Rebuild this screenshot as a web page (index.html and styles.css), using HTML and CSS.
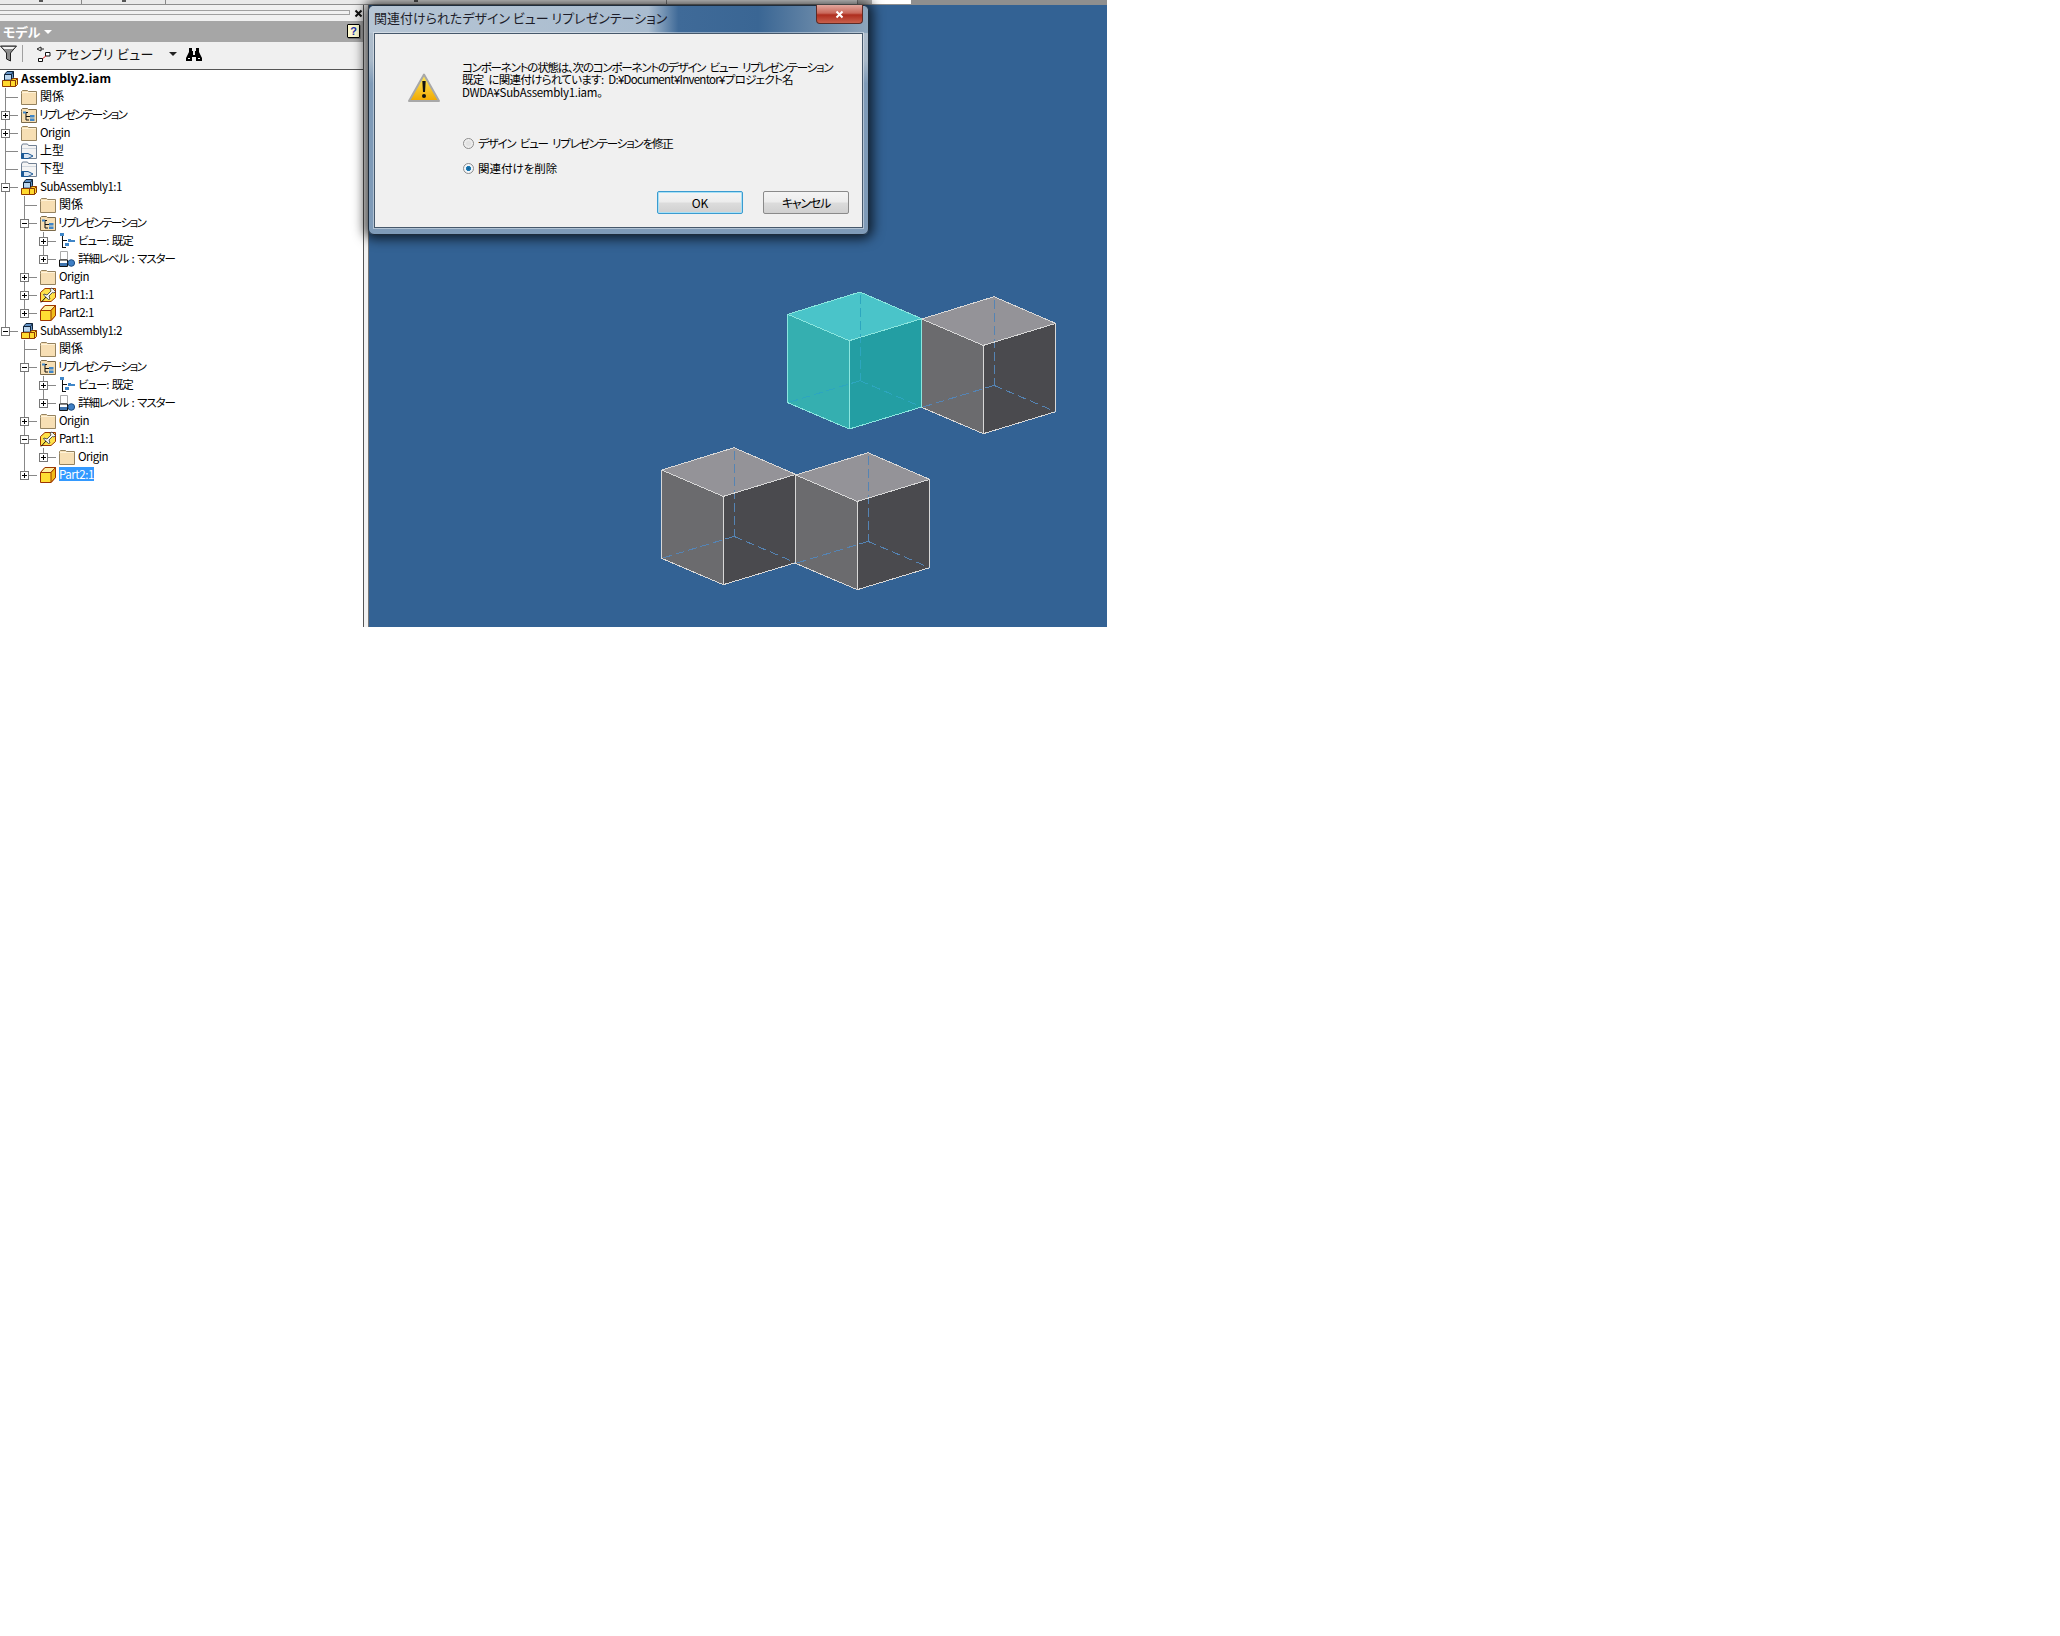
FILE: index.html
```html
<html>
  <head>
    <meta charset="utf-8">
    <title>関連付けられたデザイン ビュー リプレゼンテーション</title>
    <link rel="stylesheet" href="styles.css">
  </head>
  <body>
    <!-- shared icons -->
    <svg class="defs" width="0" height="0">
      <symbol id="i-folder" viewBox="0 0 16 16">
        <path d="M.5 4.5V15.5H15.5V2.5H7.5L6.5 1.5H1.5L.5 2.5Z" fill="#f7dfb4" stroke="#94825f"/>
        <path d="M1 3.5H15" stroke="#fff3d8"/>
      </symbol>
      <symbol id="i-rep" viewBox="0 0 16 16">
        <path d="M.5 4.5V15.5H15.5V2.5H7.5L6.5 1.5H1.5L.5 2.5Z" fill="#f7dfb4" stroke="#7c6a4a"/>
        <path d="M2.5 5.5H7M5 5.5V13H8M5 9.5H9" fill="none" stroke="#111"/>
        <path d="M9 8H13.5V10.5H9ZM9 11.5H13.5V14H9Z" fill="#3f86c8"/>
        <path d="M2 4.5H5V6.5H2Z" fill="#3f86c8"/>
      </symbol>
      <symbol id="i-seg" viewBox="0 0 16 16">
        <path d="M.5 3V15.5H15.5V2.5H7.5L6.5 1H1.5Z" fill="#f4f4f4" stroke="#6f7f92"/>
        <path d="M1 5.5H15" stroke="#cfd6de"/>
        <path d="M.5 10.5H7L12 13L7 15.5H.5Z" fill="#d9e5f2" stroke="#1d5a96"/>
        <path d="M.5 10.5H3V15.5H.5Z" fill="#1d5a96"/>
      </symbol>
      <symbol id="i-asm" viewBox="0 0 16 16">
        <path d="M2.5 3.5L5 .5H11.5V6.5L9.5 9H2.5Z" fill="#5f8fc4" stroke="#10243a"/>
        <path d="M3 4H9V8.5H3Z" fill="#bcd6ee"/>
        <path d="M2.5 3.5H9.5V9M9.5 3.5L11.5 .5" fill="none" stroke="#10243a"/>
        <path d="M.5 9.5H8.5V15.5H.5ZM8.5 9.5L11 7.5H15.5V13.5L13.5 15.5H8.5Z" fill="#ffd92e" stroke="#8d3a00"/>
        <path d="M8.5 9.5H13.5V15.5M13.5 9.5L15.5 7.5" fill="none" stroke="#8d3a00"/>
      </symbol>
      <symbol id="i-part" viewBox="0 0 16 16">
        <path d="M.5 5.5L5 .5H15.5V10.5L11 15.5H.5Z" fill="#ffdf33" stroke="#9c3500"/>
        <path d="M.5 5.5L5 .5H15.5L11 5.5Z" fill="#fff1a0" stroke="#9c3500"/>
        <path d="M11 5.5V15.5L15.5 10.5V.5Z" fill="#f0bc18" stroke="#9c3500"/>
      </symbol>
      <symbol id="i-pin" viewBox="0 0 16 16">
        <path d="M.5 5.5L5 1.5H15.5V10.5L11 14.5H.5Z" fill="#ffe24a" stroke="#9c3500"/>
        <path d="M1 15.5L6 10" stroke="#111"/>
        <path d="M4 7L7 8L11 4L10 2L12 1L15.5 4.5L14 6L12.5 5.5L9 9L10 12L8.5 12.5L3.5 8Z" fill="#f4f4f4" stroke="#333" stroke-width=".8"/>
      </symbol>
      <symbol id="i-view" viewBox="0 0 16 16">
        <path d="M1 0H5V3H1ZM9 6H12V9H9ZM12 7H16V9H12ZM6 10H10V13H6Z" fill="#3f86c8"/>
        <path d="M3.5 3V15M4 7.5H8M4 14.5H7" fill="none" stroke="#111"/>
      </symbol>
      <symbol id="i-lod" viewBox="0 0 16 16">
        <path d="M1.5 .5H8.5V8.5H1.5Z" fill="#fff" stroke="#aaa"/>
        <path d="M.5 9H8.5V15.5H.5Z" fill="#fff" stroke="#111"/>
        <path d="M1 12H8V15H1Z" fill="#3f73ad"/>
        <circle cx="12.3" cy="12" r="3.3" fill="#3f7fc4" stroke="#1d4c80"/>
      </symbol>
      <symbol id="i-x" viewBox="0 0 9 9">
        <path d="M1.5 1.5L7.5 7.5M7.5 1.5L1.5 7.5" fill="none" stroke="currentColor" stroke-width="2"/>
      </symbol>
    </svg>

    <div class="app">
      <div class="topbar">
        <div class="top-seg top-a"><span class="tick"></span></div>
        <div class="top-seg top-b"><span class="tick"></span></div>
        <div class="top-seg top-c"><span class="tick"></span></div>
        <div class="top-seg top-d"></div>
        <div class="top-seg top-e"></div>
        <div class="top-seg top-f"></div>
        <div class="top-seg top-g"></div>
      </div>

      <div class="main">
        <div class="sidebar">
          <div class="panel">
            <div class="grip">
              <div class="grip-lines"></div>
              <svg class="grip-x"><use href="#i-x"/></svg>
            </div>
            <div class="panel-head">
              <span class="panel-title">モデル</span>
              <span class="caret"></span>
              <span class="help">?</span>
            </div>
            <div class="toolbar">
              <svg class="funnel" width="17" height="17" viewBox="0 0 17 17">
                <path d="M.5 1H16.5L10.5 8V16L6.5 14V8Z" fill="#8a8a8a" stroke="#222"/>
                <path d="M2 2H15L13 4H4Z" fill="#f4f4f4"/>
              </svg>
              <span class="tool-sep"></span>
              <svg class="asm-view" width="15" height="16" viewBox="0 0 15 16">
                <path d="M1 3L5 1V5Z" fill="#fff" stroke="#222"/>
                <path d="M5 3H8" stroke="#222"/>
                <path d="M9.5 6.5H14V10H9.5Z" fill="#fff" stroke="#111"/>
                <path d="M10 10L6 13" stroke="#d22"/>
                <path d="M2.5 12.5H6.5V15.5H2.5Z" fill="#fff" stroke="#111"/>
              </svg>
              <span class="tool-label">アセンブリ ビュー</span>
              <span class="tool-caret"></span>
              <svg class="binoc" width="16" height="14" viewBox="0 0 16 14">
                <path d="M3 1H6V4H7V8H9V4H10V1H13V5L16 11V14H10V10H6V14H0V11L3 5Z" fill="#000"/>
                <path d="M2 11H4V12H2ZM12 11H14V12H12Z" fill="#fff"/>
              </svg>
            </div>
            <div class="tree">
              <div class="row"><svg class="ico ico-root"><use href="#i-asm"/></svg><span class="lbl lbl-bold">Assembly2.iam</span></div>

              <div class="row"><i class="g g-t"></i><svg class="ico"><use href="#i-folder"/></svg><span class="lbl lbl-cjk">関係</span></div>
              <div class="row"><i class="g g-t"><b class="box plus"></b></i><svg class="ico"><use href="#i-rep"/></svg><span class="lbl lbl-kana">リプレゼンテーション</span></div>
              <div class="row"><i class="g g-t"><b class="box plus"></b></i><svg class="ico"><use href="#i-folder"/></svg><span class="lbl">Origin</span></div>
              <div class="row"><i class="g g-t"></i><svg class="ico"><use href="#i-seg"/></svg><span class="lbl lbl-cjk">上型</span></div>
              <div class="row"><i class="g g-t"></i><svg class="ico"><use href="#i-seg"/></svg><span class="lbl lbl-cjk">下型</span></div>

              <div class="row"><i class="g g-t"><b class="box"></b></i><svg class="ico"><use href="#i-asm"/></svg><span class="lbl">SubAssembly1:1</span></div>
              <div class="row"><i class="g g-v"></i><i class="g g-t"></i><svg class="ico"><use href="#i-folder"/></svg><span class="lbl lbl-cjk">関係</span></div>
              <div class="row"><i class="g g-v"></i><i class="g g-t"><b class="box"></b></i><svg class="ico"><use href="#i-rep"/></svg><span class="lbl lbl-kana">リプレゼンテーション</span></div>
              <div class="row"><i class="g g-v"></i><i class="g g-v"></i><i class="g g-t"><b class="box plus"></b></i><svg class="ico"><use href="#i-view"/></svg><span class="lbl lbl-mix">ビュー: 既定</span></div>
              <div class="row"><i class="g g-v"></i><i class="g g-v"></i><i class="g g-l"><b class="box plus"></b></i><svg class="ico"><use href="#i-lod"/></svg><span class="lbl lbl-mix">詳細レベル : マスター</span></div>
              <div class="row"><i class="g g-v"></i><i class="g g-t"><b class="box plus"></b></i><svg class="ico"><use href="#i-folder"/></svg><span class="lbl">Origin</span></div>
              <div class="row"><i class="g g-v"></i><i class="g g-t"><b class="box plus"></b></i><svg class="ico"><use href="#i-pin"/></svg><span class="lbl">Part1:1</span></div>
              <div class="row"><i class="g g-v"></i><i class="g g-l"><b class="box plus"></b></i><svg class="ico"><use href="#i-part"/></svg><span class="lbl">Part2:1</span></div>

              <div class="row"><i class="g g-l"><b class="box"></b></i><svg class="ico"><use href="#i-asm"/></svg><span class="lbl">SubAssembly1:2</span></div>
              <div class="row"><i class="g"></i><i class="g g-t"></i><svg class="ico"><use href="#i-folder"/></svg><span class="lbl lbl-cjk">関係</span></div>
              <div class="row"><i class="g"></i><i class="g g-t"><b class="box"></b></i><svg class="ico"><use href="#i-rep"/></svg><span class="lbl lbl-kana">リプレゼンテーション</span></div>
              <div class="row"><i class="g"></i><i class="g g-v"></i><i class="g g-t"><b class="box plus"></b></i><svg class="ico"><use href="#i-view"/></svg><span class="lbl lbl-mix">ビュー: 既定</span></div>
              <div class="row"><i class="g"></i><i class="g g-v"></i><i class="g g-l"><b class="box plus"></b></i><svg class="ico"><use href="#i-lod"/></svg><span class="lbl lbl-mix">詳細レベル : マスター</span></div>
              <div class="row"><i class="g"></i><i class="g g-t"><b class="box plus"></b></i><svg class="ico"><use href="#i-folder"/></svg><span class="lbl">Origin</span></div>
              <div class="row"><i class="g"></i><i class="g g-t"><b class="box"></b></i><svg class="ico"><use href="#i-pin"/></svg><span class="lbl">Part1:1</span></div>
              <div class="row"><i class="g"></i><i class="g g-v"></i><i class="g g-l"><b class="box plus"></b></i><svg class="ico"><use href="#i-folder"/></svg><span class="lbl">Origin</span></div>
              <div class="row"><i class="g"></i><i class="g g-l"><b class="box plus"></b></i><svg class="ico"><use href="#i-part"/></svg><span class="lbl lbl-sel">Part2:1</span></div>
            </div>
          </div>
          <div class="splitter"></div>
        </div>

        <div class="viewport">
          <svg class="scene" viewBox="369 5 738 622">
            <defs>
              <g id="cube">
                <path class="f-top" d="M0 0L61.7 26.7L-10.7 48.7L-72.3 22.3Z"/>
                <path class="f-left" d="M-72.3 22.3L-10.7 48.7V137L-72.3 110.7Z"/>
                <path class="f-right" d="M61.7 26.7V115L-10.7 137V48.7Z"/>
                <path class="hidden-edge" d="M0 3V88.7M0 88.7L-72.3 110.7M0 88.7L61.7 115"/>
                <path class="edge" d="M0 0L61.7 26.7V115L-10.7 137L-72.3 110.7V22.3ZM-72.3 22.3L-10.7 48.7L61.7 26.7M-10.7 48.7V137"/>
              </g>
            </defs>
            <use class="cube-gray" href="#cube" x="994" y="296.7"/>
            <use class="cube-teal" href="#cube" x="860" y="292"/>
            <use class="cube-gray" href="#cube" x="734" y="447.7"/>
            <use class="cube-gray" href="#cube" x="868" y="452.7"/>
          </svg>
        </div>
      </div>

      <!-- message box sits over the panel and the viewport -->
      <div class="dialog">
        <div class="dialog-title">
          <span class="dialog-caption">関連付けられたデザイン ビュー リプレゼンテーション</span>
          <span class="dialog-close"><svg class="close-x"><use href="#i-x"/></svg></span>
        </div>
        <div class="dialog-body">
          <div class="message">
            <svg class="warn" width="32" height="30" viewBox="0 0 32 30">
              <defs>
                <linearGradient id="warn-fill" x1="0" y1="0" x2="0" y2="1">
                  <stop offset="0" stop-color="#ffe95e"/>
                  <stop offset="1" stop-color="#f0a800"/>
                </linearGradient>
              </defs>
              <path d="M16 1.5L31 28H1Z" fill="url(#warn-fill)" stroke="#a8a8a8" stroke-width="2" stroke-linejoin="round"/>
              <path d="M14.3 8H17.7L17 19H15Z" fill="#111"/>
              <circle cx="16" cy="23" r="2" fill="#111"/>
            </svg>
            <div class="message-text">
              <div class="line line-a">コンポーネントの状態は、次のコンポーネントのデザイン ビュー リプレゼンテーション</div>
              <div class="line line-b">既定 に関連付けられています: D:¥Document¥Inventor¥プロジェクト名</div>
              <div class="line line-c">DWDA¥SubAssembly1.iam。</div>
            </div>
          </div>
          <div class="options">
            <label class="option"><span class="radio"></span><span class="option-long">デザイン ビュー リプレゼンテーションを修正</span></label>
            <label class="option"><span class="radio radio-on"></span><span>関連付けを削除</span></label>
          </div>
          <div class="buttons">
            <button class="btn btn-default">OK</button>
            <button class="btn btn-cancel">キャンセル</button>
          </div>
        </div>
      </div>
    </div>
  </body>
</html>
```
FILE: styles.css
```css
body {
  margin: 0;
  background-color: #fff;
  font-family: "Noto Sans CJK JP", "Liberation Sans", sans-serif;
  font-size: 12px;
  color: #000;
  font-feature-settings: "palt";
}

.defs {
  display: block;
  height: 0;
}

.app {
  position: relative;
  width: 1107px;
  height: 627px;
  display: flex;
  flex-direction: column;
}

/* ribbon remains at the very top */
.topbar {
  height: 4px;
  display: flex;
  border-bottom: 1px solid #8e8e8e;
  flex-shrink: 0;
}

.top-seg {
  background-color: #e9e9e9;
  border-right: 1px solid #888;
  display: flex;
  justify-content: center;
}

.tick {
  width: 4px;
  height: 2px;
  background-color: #555;
}

.top-a { width: 81px; }
.top-b { width: 83px; }
.top-c { width: 500px; }
.top-d { width: 190px; }
.top-e { width: 14px; background-color: #b8b8b8; border-right: none; }
.top-f { width: 39px; background-color: #fff; border-right: none; }
.top-g { flex: 1; background-color: #8f8f8f; border-right: none; }

.main {
  flex: 1;
  display: flex;
  min-height: 0;
}

.sidebar {
  width: 369px;
  display: flex;
  flex-shrink: 0;
}

.panel {
  width: 364px;
  display: flex;
  flex-direction: column;
  border-right: 1px solid #555;
  box-sizing: border-box;
}

.splitter {
  flex: 1;
  background: linear-gradient(to right, #f2f2f2 0, #f2f2f2 4px, #777 4px);
}

.grip {
  height: 16px;
  background-color: #f0f0f0;
  display: flex;
  align-items: center;
}

.grip-lines {
  width: 349px;
  height: 3px;
  margin-top: -1px;
  border-top: 1px solid #a0a0a0;
  border-bottom: 1px solid #a0a0a0;
  border-right: 1px solid #a0a0a0;
}

.grip-x {
  width: 9px;
  height: 9px;
  margin-left: 4px;
  color: #111;
}

.panel-head {
  height: 21px;
  background-color: #a6a6a6;
  display: flex;
  align-items: center;
  padding-left: 3px;
  color: #fff;
}

.panel-title {
  font-weight: bold;
  font-size: 13px;
}

.caret {
  width: 0;
  height: 0;
  margin-left: 4px;
  border-left: 4px solid transparent;
  border-right: 4px solid transparent;
  border-top: 4px solid #fff;
}

.help {
  width: 11px;
  height: 12px;
  margin: -2px 3px 0 auto;
  border: 1px solid #000;
  border-radius: 1px;
  background-color: #fffbd0;
  color: #1c2fa8;
  font: bold 11px/12px "Liberation Sans", sans-serif;
  text-align: center;
  box-shadow: 1px 1px 0 #777;
}

.toolbar {
  height: 23px;
  padding-bottom: 4px;
  background-color: #f0f0f0;
  display: flex;
  align-items: center;
  border-bottom: 1px solid #555;
}

.funnel {
  flex-shrink: 0;
}

.tool-sep {
  width: 1px;
  height: 17px;
  margin-left: 5px;
  background-color: #a0a0a0;
}

.asm-view {
  margin-left: 13px;
}

.tool-label {
  margin-left: 4px;
  width: 109px;
  font-size: 13px;
  letter-spacing: 0.3px;
  color: #111;
}

.tool-caret {
  width: 0;
  height: 0;
  margin-left: 5px;
  border-left: 4px solid transparent;
  border-right: 4px solid transparent;
  border-top: 4px solid #222;
}

.binoc {
  margin-left: 9px;
}

.tree {
  flex: 1;
  background-color: #fff;
}

.row {
  height: 18px;
  display: flex;
  align-items: center;
  white-space: nowrap;
}

/* tree guide cell: one indent level */
.g {
  width: 19px;
  height: 18px;
  flex-shrink: 0;
  display: block;
}

.g-v {
  background: linear-gradient(#888, #888) 5px 0 / 1px 100% no-repeat;
}

.g-t {
  background:
    linear-gradient(#888, #888) 5px 0 / 1px 100% no-repeat,
    linear-gradient(#888, #888) 5px 9px / 13px 1px no-repeat;
}

.g-l {
  background:
    linear-gradient(#888, #888) 5px 0 / 1px 10px no-repeat,
    linear-gradient(#888, #888) 5px 9px / 13px 1px no-repeat;
}

.box {
  display: block;
  width: 7px;
  height: 7px;
  margin: 5px 0 0 1px;
  border: 1px solid #777;
  background: linear-gradient(#000, #000) center / 5px 1px no-repeat, #fff;
}

.box.plus {
  background:
    linear-gradient(#000, #000) center / 5px 1px no-repeat,
    linear-gradient(#000, #000) center / 1px 5px no-repeat,
    #fff;
}

.ico {
  width: 16px;
  height: 16px;
  margin-left: 2px;
  flex-shrink: 0;
}

.lbl {
  margin-left: 3px;
  margin-bottom: 2px;
  line-height: 14px;
  font-size: 11.5px;
  letter-spacing: -0.45px;
}

.lbl-bold {
  font-size: 12px;
  font-weight: bold;
  letter-spacing: 0;
}

.lbl-cjk {
  font-size: 12px;
  letter-spacing: 0;
}

.lbl-kana {
  margin-left: 2px;
  letter-spacing: -1.5px;
}

.lbl-mix {
  letter-spacing: -1.1px;
  word-spacing: 2px;
}

.lbl-sel {
  background-color: #3399ff;
  color: #fff;
}

.viewport {
  flex: 1;
  background-color: #336294;
}

.scene {
  display: block;
  width: 100%;
  height: 100%;
}

.cube-gray {
  --top: #949398;
  --left: #6b6b6e;
  --right: #4a4a4e;
  --edge: #d8d8d8;
  --hidden: #5584b4;
}

.cube-teal {
  --top: #4ac4c9;
  --left: #35afb0;
  --right: #239ea3;
  --edge: #8be6df;
  --hidden: #2da6bf;
}

.f-top { fill: var(--top); }
.f-left { fill: var(--left); }
.f-right { fill: var(--right); }

.edge {
  fill: none;
  stroke: var(--edge);
  stroke-width: 1;
  shape-rendering: crispEdges;
}

.hidden-edge {
  fill: none;
  stroke: var(--hidden);
  stroke-width: 1;
  stroke-dasharray: 9 4;
  shape-rendering: crispEdges;
}

/* message box */
.dialog {
  position: absolute;
  left: 368px;
  top: 5px;
  width: 501px;
  height: 230px;
  box-sizing: border-box;
  padding: 0 5px 6px 5px;
  display: flex;
  flex-direction: column;
  border: 1px solid #1e2d3d;
  border-radius: 6px;
  background: linear-gradient(to bottom, #b4c1ce 0, #a9b9c9 24%, #7f9bb8 34%, #7f9bb8 100%);
  box-shadow: 0 0 12px 4px rgba(0, 0, 0, 0.7);
}

.dialog-title {
  height: 27px;
  flex-shrink: 0;
  margin: 0 -5px;
  padding: 0 5px;
  display: flex;
  align-items: flex-start;
  justify-content: space-between;
  border-radius: 5px 5px 0 0;
  background: linear-gradient(to right, #b6c5d4 0, #a9bccf 56%, #3f6a98 62%, #3a6694 78%, #6f8dab 92%, #8ea6bd 100%);
}

.dialog-caption {
  font-size: 13px;
  line-height: 24px;
  color: #1c1c28;
}

.dialog-close {
  width: 47px;
  height: 19px;
  margin-top: -1px;
  display: flex;
  align-items: center;
  justify-content: center;
  border: 1px solid #5c2b26;
  border-top: none;
  border-radius: 0 0 4px 4px;
  box-sizing: border-box;
  color: #fff;
  background: linear-gradient(to bottom, #e2a79e 0, #c9685a 45%, #ae2d1e 55%, #c9604c 100%);
}

.close-x {
  width: 9px;
  height: 9px;
}

.dialog-body {
  flex: 1;
  background-color: #f0f0f0;
  border: 1px solid #46586b;
  box-shadow: 0 0 0 1px rgba(255, 255, 255, 0.4);
  display: flex;
  flex-direction: column;
  padding: 27px 13px 0 32px;
}

.message {
  display: flex;
  height: 71px;
}

.warn {
  margin-top: 12px;
  margin-left: 1px;
  flex-shrink: 0;
}

.message-text {
  margin-left: 22px;
  font-size: 11.5px;
  white-space: nowrap;
}

.line {
  height: 12.3px;
  line-height: 12.3px;
}

.line-a { letter-spacing: -1.2px; word-spacing: 3px; }
.line-b { letter-spacing: -0.72px; word-spacing: 3px; }
.line-c { letter-spacing: -0.3px; }

.options {
  margin: 4px 0 0 56px;
  display: flex;
  flex-direction: column;
  gap: 11px;
  font-size: 11.5px;
}

.option {
  display: flex;
  align-items: center;
  height: 14px;
  gap: 4px;
}

.option-long {
  letter-spacing: -1.2px;
  word-spacing: 3px;
}

.radio {
  width: 9px;
  height: 9px;
  border: 1px solid #8c8c8c;
  border-radius: 50%;
  background: radial-gradient(circle, #e2e2e2 30%, #f8f8f8 80%);
}

.radio-on {
  background: radial-gradient(circle at 50% 50%, #0f5e96 0, #1f7fb8 38%, #f2f6fa 45%);
}

.buttons {
  margin-top: 16px;
  display: flex;
  justify-content: flex-end;
  gap: 20px;
}

.btn {
  width: 86px;
  height: 23px;
  padding: 0;
  border: 1px solid #8a8a8a;
  border-radius: 2px;
  font-family: inherit;
  font-size: 12px;
  font-feature-settings: "palt";
  color: #000;
  background: linear-gradient(to bottom, #f4f4f4 0, #ececec 48%, #dcdcdc 52%, #d0d0d0 100%);
}

.btn-default {
  border-color: #3a9bd0;
  box-shadow: inset 0 0 0 1px #a8e0f5;
}

.btn-cancel {
  letter-spacing: -1.2px;
}
```
